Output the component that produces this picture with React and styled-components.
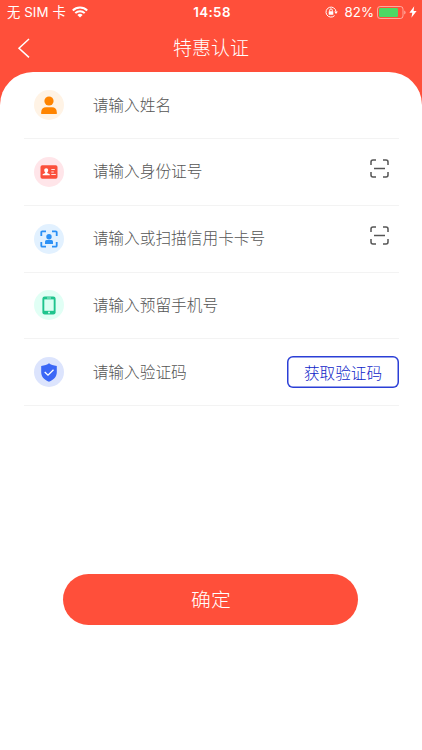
import * as React from 'react';
import styled, { createGlobalStyle } from 'styled-components';

const GlobalStyle = createGlobalStyle`
  body {
    margin: 0;
    background: #ff4f3a;
    font-family: 'Noto Sans CJK SC', sans-serif;
    font-weight: 300;
  }
`;

const Main = styled.div`
  height: 750px;
  display: flex;
  flex-direction: column;
  overflow: hidden;
`;

const StatusBar = styled.div`
  height: 24px;
  padding: 0 5px 0 7px;
  display: grid;
  grid-template-columns: 1fr auto 1fr;
  align-items: center;
  color: #fff;
  font-family: Inter, 'Noto Sans CJK SC', sans-serif;
  font-size: 13.3px;
  font-weight: 400;
  line-height: 24px;
`;

const StatusGroup = styled.div`
  display: flex;
  align-items: center;
  justify-content: ${(props) => (props.$end ? 'flex-end' : 'flex-start')};
`;

const Carrier = styled.span`
  margin-right: 6px;
  letter-spacing: 0.1px;
  white-space: nowrap;
`;

const Time = styled.span`
  font-weight: 600;
  letter-spacing: 0.4px;
`;

const Percent = styled.span`
  margin: 0 3px 0 7px;
`;

const TitleBar = styled.header`
  height: 48px;
  padding: 0 17px;
  display: grid;
  grid-template-columns: 14px 1fr 14px;
  align-items: center;
  color: #fff;
`;

const BackButton = styled.button`
  border: 0;
  padding: 0;
  background: none;
  color: inherit;
  display: flex;
`;

const Title = styled.h1`
  margin: 0;
  padding-bottom: 2px;
  font-size: 19px;
  font-weight: 300;
  line-height: 46px;
  text-align: center;
`;

const Sheet = styled.main`
  flex: 1;
  background: #fff;
  border-radius: 33px 33px 0 0;
  display: flex;
  flex-direction: column;
`;

const Row = styled.div`
  box-sizing: border-box;
  height: 66.85px;
  margin: 0 23px 0 24px;
  padding-left: 10px;
  display: flex;
  align-items: center;
  border-bottom: 1px solid #f3f3f3;
`;

const Badge = styled.div`
  width: 30px;
  height: 30px;
  flex: none;
  border-radius: 50%;
  background: ${(props) => props.$tint};
  display: flex;
  align-items: center;
  justify-content: center;
`;

const Placeholder = styled.span`
  flex: 1;
  margin-left: 28.7px;
  padding-bottom: 0.6px;
  font-size: 15.7px;
  line-height: 24px;
  color: #555;
`;

const ScanButton = styled.button`
  border: 0;
  padding: 0;
  margin: 0 10px 6px 0;
  background: none;
  display: flex;
`;

const CodeButton = styled.button`
  width: 112px;
  height: 32px;
  padding: 0;
  border: 0;
  border-radius: 6px;
  box-shadow: inset 0 0 0 1.5px #2b3fd6;
  background: #fff;
  color: #0f25c8;
  font-family: inherit;
  font-size: 15.6px;
  font-weight: 300;
  line-height: 32px;
`;

const SubmitButton = styled.button`
  width: 295px;
  height: 51px;
  margin: 168px auto 0 63.4px;
  padding: 0 0 1px;
  border: 0;
  border-radius: 26px;
  background: #ff4f3a;
  color: #fff;
  font-family: inherit;
  font-size: 19.8px;
  font-weight: 300;
  line-height: 50px;
`;

const WifiIcon = () => (
  <svg width="16" height="12" viewBox="0 0 16 12" fill="none" stroke="#fff" strokeWidth="2">
    <path d="M.8 4.5a10.2 10.2 0 0 1 14.4 0M3.3 7.1a6.6 6.6 0 0 1 9.4 0" />
    <path d="M8 11.6 5.4 9a3.7 3.7 0 0 1 5.2 0z" fill="#fff" stroke="none" />
  </svg>
);

const RotationLockIcon = () => (
  <svg width="13" height="12" viewBox="0 0 13 12" fill="none" stroke="#fff" strokeWidth="1">
    <path d="M9.6 9.6A5 5 0 1 1 11 5.6" />
    <path d="M9.2 5.5h3.6L11 8z" fill="#fff" stroke="none" />
    <rect x="3.7" y="5.2" width="4.6" height="3.6" rx=".4" fill="#fff" stroke="none" />
    <path d="M4.7 5.5V4.2a1.3 1.3 0 0 1 2.6 0v1.3" />
  </svg>
);

const BatteryIcon = () => (
  <svg width="29" height="13" viewBox="0 0 29 13">
    <rect x=".5" y=".5" width="25.5" height="12" rx="2.6" fill="none" stroke="#fff" strokeOpacity=".5" />
    <rect x="2" y="2" width="19" height="9" rx="1.2" fill="#4cd964" />
    <path d="M27.2 4.5q1.4.6 1.4 2t-1.4 2z" fill="#fff" fillOpacity=".5" />
  </svg>
);

const Bolt = styled.svg`
  margin-left: 3px;
`;

const BoltIcon = () => (
  <Bolt width="8" height="12" viewBox="0 0 8 12">
    <path d="M5.2.3.4 6.7h2.9L2.4 11.7 7.6 5H4.6z" fill="#fff" />
  </Bolt>
);

const BackIcon = () => (
  <svg width="14" height="22" viewBox="0 0 14 22" fill="none" stroke="#fff" strokeWidth="1.5">
    <path d="M12 2 2 11.2 12 20.4" />
  </svg>
);

const PersonIcon = () => (
  <svg width="18" height="20" viewBox="0 0 18 20" fill="#ff8400">
    <circle cx="9" cy="6" r="4.6" />
    <path d="M1.2 18.9v-1.7c0-3 2-4.9 4.8-4.9h6c2.8 0 4.8 1.9 4.8 4.9v1.7z" />
  </svg>
);

const IdCardIcon = () => (
  <svg width="18" height="14" viewBox="0 0 18 14">
    <rect x=".5" y=".3" width="17" height="13.4" rx="1.8" fill="#fb503c" />
    <path
      d="M6.2 3.2c1.2 0 2 .8 2 2 0 1-.4 1.8-1 2.3v.6l2 .8c.4.2.6.5.6.9v.4H2.6v-.4c0-.4.2-.7.6-.9l2-.8v-.6c-.6-.5-1-1.3-1-2.3 0-1.2.8-2 2-2z"
      fill="#fff"
    />
    <path d="M11.3 4.5h3.5M11.3 7h2.5M11.3 9.5h4.5" stroke="#fff" strokeOpacity=".85" />
  </svg>
);

const FaceScanIcon = () => (
  <svg width="18" height="18" viewBox="0 0 18 18" fill="#2b90f5">
    <path
      d="M1.3 6V2.3a1 1 0 0 1 1-1H6M12 1.3h3.7a1 1 0 0 1 1 1V6M16.7 12v3.7a1 1 0 0 1-1 1H12M6 16.7H2.3a1 1 0 0 1-1-1V12"
      fill="none"
      stroke="#2b90f5"
      strokeWidth="1.8"
    />
    <circle cx="9" cy="6.8" r="2.7" />
    <path d="M5 14v-2.4a1.5 1.5 0 0 1 1.5-1.5h5a1.5 1.5 0 0 1 1.5 1.5V14z" />
  </svg>
);

const PhoneIcon = () => (
  <svg width="14" height="19" viewBox="0 0 14 19">
    <rect x=".4" y=".5" width="13.2" height="18" rx="2.3" fill="#1fc48d" />
    <rect x="2.3" y="3.4" width="9.4" height="11.4" fill="#dcfff2" />
    <path d="M5 2h4" stroke="#dcfff2" strokeWidth=".7" />
    <circle cx="7" cy="16.6" r="1" fill="#dcfff2" />
  </svg>
);

const ShieldIcon = () => (
  <svg width="16" height="19" viewBox="0 0 16 19">
    <path
      d="M8 .3C9.6 1.7 12.5 2.7 15.8 3v6.3c0 4.3-3 7.6-7.8 9.5C3.2 16.9.2 13.6.2 9.3V3C3.5 2.7 6.4 1.7 8 .3z"
      fill="#3b67f6"
    />
    <path d="m3.7 9 3.3 3.2 5.5-5.5" fill="none" stroke="#fff" strokeWidth="1.3" />
  </svg>
);

const ScanIcon = () => (
  <svg width="19" height="19" viewBox="0 0 19 19" fill="none" stroke="#555" strokeWidth="1.5">
    <path d="M1 6V3a2 2 0 0 1 2-2h3M13 1h3a2 2 0 0 1 2 2v3M18 13v3a2 2 0 0 1-2 2h-3M6 18H3a2 2 0 0 1-2-2v-3" />
    <path d="M4 9.5h11" />
  </svg>
);

const fields = [
  { id: 'name', text: '请输入姓名', tint: '#fff3e5', icon: <PersonIcon /> },
  { id: 'idCard', text: '请输入身份证号', tint: '#ffe5e9', icon: <IdCardIcon />, scan: true },
  { id: 'bankCard', text: '请输入或扫描信用卡卡号', tint: '#e2f1ff', icon: <FaceScanIcon />, scan: true },
  { id: 'phone', text: '请输入预留手机号', tint: '#e1fff5', icon: <PhoneIcon /> },
  { id: 'code', text: '请输入验证码', tint: '#dce4fd', icon: <ShieldIcon />, code: true },
];

function App() {
  return (
    <>
      <GlobalStyle />
      <Main>
        <StatusBar>
          <StatusGroup>
            <Carrier>无 SIM 卡</Carrier>
            <WifiIcon />
          </StatusGroup>
          <Time>14:58</Time>
          <StatusGroup $end>
            <RotationLockIcon />
            <Percent>82%</Percent>
            <BatteryIcon />
            <BoltIcon />
          </StatusGroup>
        </StatusBar>
        <TitleBar>
          <BackButton>
            <BackIcon />
          </BackButton>
          <Title>特惠认证</Title>
        </TitleBar>
        <Sheet>
          {fields.map((field) => (
            <Row key={field.id}>
              <Badge $tint={field.tint}>{field.icon}</Badge>
              <Placeholder>{field.text}</Placeholder>
              {field.scan && (
                <ScanButton>
                  <ScanIcon />
                </ScanButton>
              )}
              {field.code && <CodeButton>获取验证码</CodeButton>}
            </Row>
          ))}
          <SubmitButton>确定</SubmitButton>
        </Sheet>
      </Main>
    </>
  );
}

export default App;
